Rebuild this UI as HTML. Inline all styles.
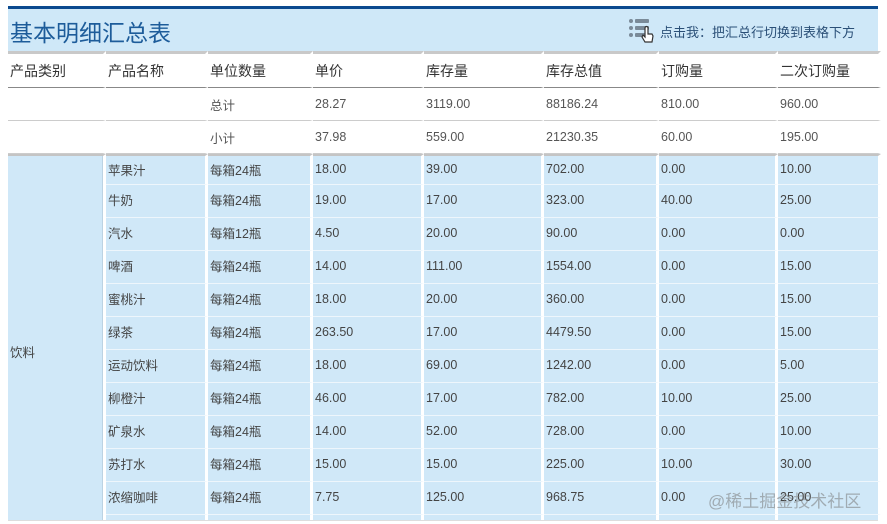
<!DOCTYPE html>
<html><head><meta charset="utf-8"><style>
*{margin:0;padding:0;box-sizing:border-box}
html,body{width:887px;height:524px;overflow:hidden}
body{background:#fff;font-family:"Liberation Sans","Noto Sans CJK SC",sans-serif;color:#444;position:relative}
.topbar{position:absolute;left:8px;top:6px;width:870px;height:3px;background:#0b4a8f}
.band{position:absolute;left:8px;top:9px;width:870px;height:43px;background:#cfe8f8}
.title{position:absolute;left:10px;top:14px;font-size:23px;color:#1d5c9a}
.link{position:absolute;left:660px;top:22px;font-size:13px;color:#2a4f77}
.icon{position:absolute;left:628px;top:18px}
.wrap{position:absolute;left:0;top:0;width:887px;height:520px;overflow:hidden}
table{position:absolute;left:8px;top:51px;border-collapse:separate;border-spacing:0;table-layout:fixed;width:873px}
td{border-right:3px solid #fff;padding-left:2px;white-space:nowrap;overflow:hidden;vertical-align:middle}
tr.h td{height:37px;font-size:14px;color:#333;border-top:3px solid #c9c9c9;border-bottom:1px solid #888;padding-top:1px}
tr.s td{height:33px;font-size:12.5px;color:#555;border-bottom:1px solid #ccc}
tr.d td{height:33px;font-size:12.5px;color:#444;background:#d0e8f8;border-bottom:1px solid #eef6fc;padding-bottom:3px}
tr.first td{border-top:2px solid #c4c4c4;height:31px;padding-bottom:2px}
td.cat{background:#d0e8f8;box-shadow:inset -1px 0 0 #bcd3e3;padding-bottom:0!important}
.bot{position:absolute;left:8px;top:520px;width:870px;height:1px;background:#ddd}
</style></head><body>
<div class="topbar"></div>
<div class="band"></div>
<div class="title">基本明细汇总表</div>
<svg class="icon" width="32" height="26" viewBox="0 0 32 26">
<g fill="#7a8a98"><circle cx="3" cy="3" r="2"/><circle cx="3" cy="10" r="2"/><circle cx="3" cy="17" r="2"/>
<rect x="7" y="1" width="14" height="4" rx="1"/><rect x="7" y="8" width="14" height="4" rx="1"/><rect x="7" y="15" width="10" height="4" rx="1"/></g>
<path d="M17 10 v9 l-2 -2 l-1 2 l3 5 h7 l1 -6 l-1 -2 h-4 v-6 a1.5 1.5 0 0 0 -3 0z" fill="#fff" stroke="#333" stroke-width="1.2"/>
</svg>
<div class="link">点击我：把汇总行切换到表格下方</div>
<div class="wrap">
<table>
<colgroup><col style="width:98px"><col style="width:102px"><col style="width:105px"><col style="width:111px"><col style="width:120px"><col style="width:115px"><col style="width:119px"><col style="width:103px"></colgroup>
<tr class="h"><td>产品类别</td><td>产品名称</td><td>单位数量</td><td>单价</td><td>库存量</td><td>库存总值</td><td>订购量</td><td>二次订购量</td></tr>
<tr class="s"><td></td><td></td><td>总计</td><td>28.27</td><td>3119.00</td><td>88186.24</td><td>810.00</td><td>960.00</td></tr>
<tr class="s"><td></td><td></td><td>小计</td><td>37.98</td><td>559.00</td><td>21230.35</td><td>60.00</td><td>195.00</td></tr>
<tr class="d first"><td class="cat" rowspan="12">饮料</td><td>苹果汁</td><td>每箱24瓶</td><td>18.00</td><td>39.00</td><td>702.00</td><td>0.00</td><td>10.00</td></tr>
<tr class="d"><td>牛奶</td><td>每箱24瓶</td><td>19.00</td><td>17.00</td><td>323.00</td><td>40.00</td><td>25.00</td></tr>
<tr class="d"><td>汽水</td><td>每箱12瓶</td><td>4.50</td><td>20.00</td><td>90.00</td><td>0.00</td><td>0.00</td></tr>
<tr class="d"><td>啤酒</td><td>每箱24瓶</td><td>14.00</td><td>111.00</td><td>1554.00</td><td>0.00</td><td>15.00</td></tr>
<tr class="d"><td>蜜桃汁</td><td>每箱24瓶</td><td>18.00</td><td>20.00</td><td>360.00</td><td>0.00</td><td>15.00</td></tr>
<tr class="d"><td>绿茶</td><td>每箱24瓶</td><td>263.50</td><td>17.00</td><td>4479.50</td><td>0.00</td><td>15.00</td></tr>
<tr class="d"><td>运动饮料</td><td>每箱24瓶</td><td>18.00</td><td>69.00</td><td>1242.00</td><td>0.00</td><td>5.00</td></tr>
<tr class="d"><td>柳橙汁</td><td>每箱24瓶</td><td>46.00</td><td>17.00</td><td>782.00</td><td>10.00</td><td>25.00</td></tr>
<tr class="d"><td>矿泉水</td><td>每箱24瓶</td><td>14.00</td><td>52.00</td><td>728.00</td><td>0.00</td><td>10.00</td></tr>
<tr class="d"><td>苏打水</td><td>每箱24瓶</td><td>15.00</td><td>15.00</td><td>225.00</td><td>10.00</td><td>30.00</td></tr>
<tr class="d"><td>浓缩咖啡</td><td>每箱24瓶</td><td>7.75</td><td>125.00</td><td>968.75</td><td>0.00</td><td>25.00</td></tr>
<tr class="d"><td></td><td></td><td></td><td></td><td></td><td></td><td></td></tr>
</table>
</div>
<div class="bot"></div>
<div style="position:absolute;left:708px;top:487px;font-size:17px;color:rgba(120,120,120,0.55)">@稀土掘金技术社区</div>
</body></html>
